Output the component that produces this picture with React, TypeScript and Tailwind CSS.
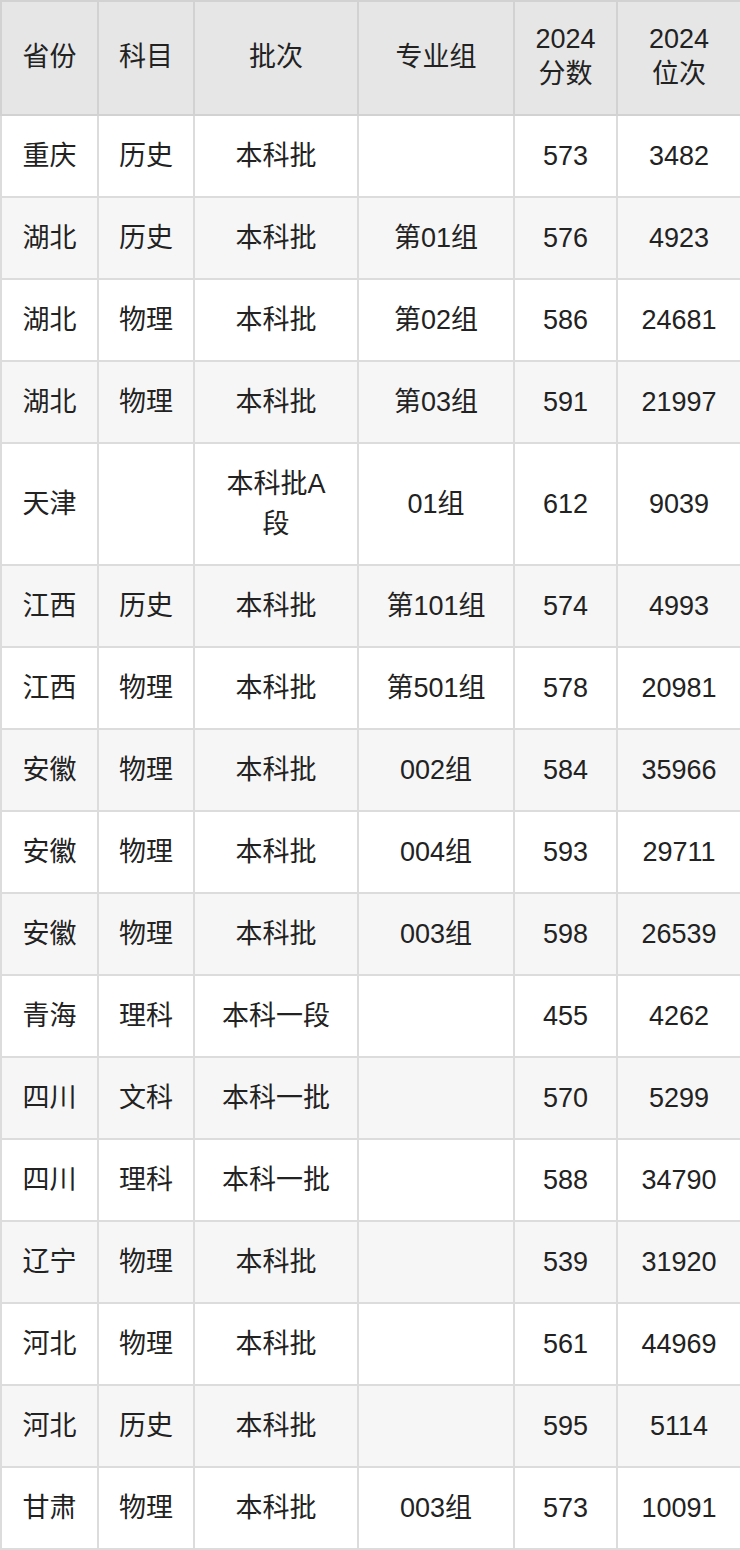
const rows: string[][] = [
  ["重庆", "历史", "本科批", "", "573", "3482"],
  ["湖北", "历史", "本科批", "第01组", "576", "4923"],
  ["湖北", "物理", "本科批", "第02组", "586", "24681"],
  ["湖北", "物理", "本科批", "第03组", "591", "21997"],
  ["天津", "", "本科批A段", "01组", "612", "9039"],
  ["江西", "历史", "本科批", "第101组", "574", "4993"],
  ["江西", "物理", "本科批", "第501组", "578", "20981"],
  ["安徽", "物理", "本科批", "002组", "584", "35966"],
  ["安徽", "物理", "本科批", "004组", "593", "29711"],
  ["安徽", "物理", "本科批", "003组", "598", "26539"],
  ["青海", "理科", "本科一段", "", "455", "4262"],
  ["四川", "文科", "本科一批", "", "570", "5299"],
  ["四川", "理科", "本科一批", "", "588", "34790"],
  ["辽宁", "物理", "本科批", "", "539", "31920"],
  ["河北", "物理", "本科批", "", "561", "44969"],
  ["河北", "历史", "本科批", "", "595", "5114"],
  ["甘肃", "物理", "本科批", "003组", "573", "10091"],
];

const th = "border-2 border-[#d2d2d2] px-3 pt-[20px] pb-[22px] leading-[35px] font-normal";

export default function App() {
  return (
    <div className="w-[740px] bg-white text-[#222] text-[27px] font-['Liberation_Sans','Noto_Sans_CJK_SC',sans-serif]">
      <table className="w-[740px] table-fixed border-collapse border-2 border-[#d6d6d6]">
        <thead>
          <tr className="bg-[#e6e6e6]">
            <th className={`w-[97px] ${th}`}>省份</th>
            <th className={`w-[96px] ${th}`}>科目</th>
            <th className={`w-[164px] ${th}`}>批次</th>
            <th className={`w-[156px] ${th}`}>专业组</th>
            <th className={`w-[103px] ${th}`}>
              2024
              <br />
              分数
            </th>
            <th className={`w-[124px] ${th}`}>
              2024
              <br />
              位次
            </th>
          </tr>
        </thead>
        <tbody>
          {rows.map((r, i) => (
            <tr key={i} className={i % 2 === 1 ? "bg-[#f6f6f6]" : "bg-white"}>
              {r.map((c, j) => (
                <td key={j} className="border-2 border-[#dcdcdc] px-5 py-5 text-center leading-10 break-all">
                  {c}
                </td>
              ))}
            </tr>
          ))}
        </tbody>
      </table>
    </div>
  );
}
